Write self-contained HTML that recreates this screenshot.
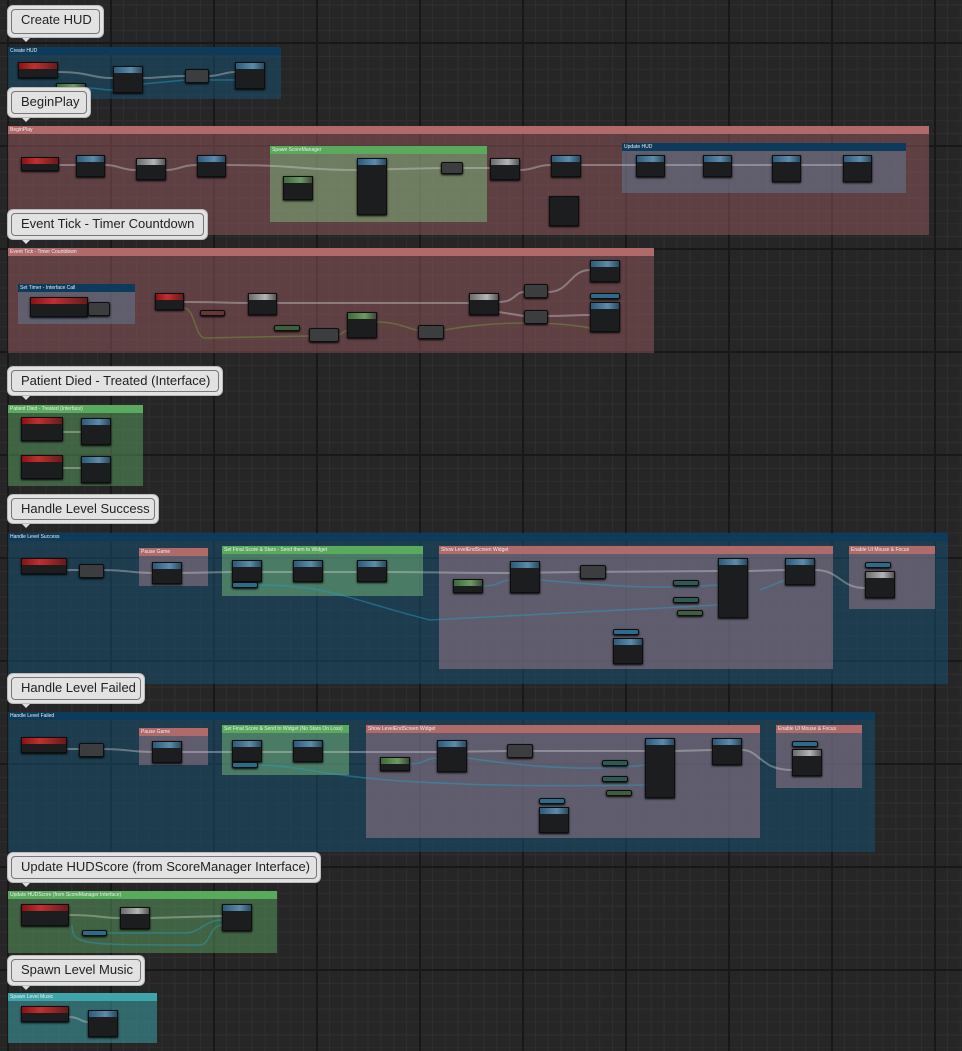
<!DOCTYPE html>
<html><head><meta charset="utf-8"><style>
*{margin:0;padding:0;box-sizing:border-box}
html,body{width:962px;height:1051px;overflow:hidden}
body{position:relative;background-color:#262626;
background-image:
linear-gradient(90deg,#181818 2px,transparent 2px),
linear-gradient(0deg,#181818 2px,transparent 2px),
linear-gradient(90deg,#2f2f2f 1px,transparent 1px),
linear-gradient(0deg,#2f2f2f 1px,transparent 1px);
background-size:103px 103px,103px 103px,12.875px 12.875px,12.875px 12.875px;
background-position:7px 0,0 44px,7px 0,0 44px;
font-family:"Liberation Sans",sans-serif}
.c{position:absolute;border:0}
.c .t{height:8px;font-size:5px;color:#eee;padding-left:2px;line-height:8px;white-space:nowrap;overflow:hidden}
.c .b{position:absolute;left:0;right:0;top:8px;bottom:0}
.blue .t{background:#0c3b5c}.blue .b{background:rgba(22,78,112,.55)}
.red .t{background:#b06a6a}.red .b{background:rgba(150,90,95,.5)}
.green .t{background:#5aaa5e}.green .b{background:rgba(90,160,95,.5)}
.teal .t{background:#3ea6aa}.teal .b{background:rgba(60,160,165,.55)}
.inred .t{background:#b06a6a}.inred .b{background:rgba(150,120,135,.55)}
.inblue .t{background:#0c3b5c}.inblue .b{background:rgba(100,130,160,.45)}
.ingreen .t{background:#5aaa5e}.ingreen .b{background:rgba(130,200,130,.45)}
.cb{position:absolute;background:#e2e2e2;border-radius:5px;padding:3px;box-shadow:0 0 0 1px #bbb}
.cb div{border:1px solid #777;border-radius:4px;height:100%;font-size:13px;color:#222;padding:0 9px;line-height:20px;white-space:nowrap}
.cb:after{content:"";position:absolute;left:14px;bottom:-5px;border:4px solid transparent;border-top-color:#ddd;border-bottom:0}
.n{position:absolute;background:#1b1d1e;border:1px solid #0e0e0e;box-shadow:0 1px 2px #000}
.n:before{content:"";position:absolute;left:0;right:0;top:0;height:6px}
.n.r:before{background:linear-gradient(90deg,#8a1212,#c03030 40%,#6a1a1a)}
.n.u:before{background:linear-gradient(90deg,#2d5a7a,#5b8cab 60%,#294a60)}
.n.g:before{background:linear-gradient(90deg,#6a6a6a,#b5b5b5 60%,#555)}
.n.gr:before{background:linear-gradient(90deg,#3d6a3d,#6f9a60 60%,#3a4a3a)}
.n.s{background:#3b3d3f;border-radius:2px}
.n.s:before{display:none}
.n.sb{background:#2e6a8a;border-radius:2px}.n.sb:before{display:none}
.n.sg{background:#3e5e3e;border-radius:2px}.n.sg:before{display:none}
.n.st{background:#2d5a52;border-radius:2px}.n.st:before{display:none}
svg{position:absolute;left:0;top:0}
</style></head><body>

<!-- comment boxes -->
<div class="c blue" style="left:8px;top:47px;width:273px;height:52px"><div class="t">Create HUD</div><div class="b"></div></div>
<div class="c red" style="left:8px;top:126px;width:921px;height:109px"><div class="t">BeginPlay</div><div class="b"></div></div>
<div class="c ingreen" style="left:270px;top:146px;width:217px;height:76px"><div class="t">Spawn ScoreManager</div><div class="b"></div></div>
<div class="c inblue" style="left:622px;top:143px;width:284px;height:50px"><div class="t">Update HUD</div><div class="b"></div></div>
<div class="c red" style="left:8px;top:248px;width:646px;height:105px"><div class="t">Event Tick - Timer Countdown</div><div class="b"></div></div>
<div class="c inblue" style="left:18px;top:284px;width:117px;height:40px"><div class="t">Set Timer - Interface Call</div><div class="b"></div></div>
<div class="c green" style="left:8px;top:405px;width:135px;height:81px"><div class="t">Patient Died - Treated (Interface)</div><div class="b"></div></div>
<div class="c blue" style="left:8px;top:533px;width:940px;height:151px"><div class="t">Handle Level Success</div><div class="b"></div></div>
<div class="c inred" style="left:139px;top:548px;width:69px;height:38px"><div class="t">Pause Game</div><div class="b"></div></div>
<div class="c ingreen" style="left:222px;top:546px;width:201px;height:50px"><div class="t">Set Final Score &amp; Stars - Send them to Widget</div><div class="b"></div></div>
<div class="c inred" style="left:439px;top:546px;width:394px;height:123px"><div class="t">Show LevelEndScreen Widget</div><div class="b"></div></div>
<div class="c inred" style="left:849px;top:546px;width:86px;height:63px"><div class="t">Enable UI Mouse &amp; Focus</div><div class="b"></div></div>
<div class="c blue" style="left:8px;top:712px;width:867px;height:140px"><div class="t">Handle Level Failed</div><div class="b"></div></div>
<div class="c inred" style="left:139px;top:728px;width:69px;height:37px"><div class="t">Pause Game</div><div class="b"></div></div>
<div class="c ingreen" style="left:222px;top:725px;width:127px;height:50px"><div class="t">Set Final Score &amp; Send to Widget (No Stars On Loss)</div><div class="b"></div></div>
<div class="c inred" style="left:366px;top:725px;width:394px;height:113px"><div class="t">Show LevelEndScreen Widget</div><div class="b"></div></div>
<div class="c inred" style="left:776px;top:725px;width:86px;height:63px"><div class="t">Enable UI Mouse &amp; Focus</div><div class="b"></div></div>
<div class="c green" style="left:8px;top:891px;width:269px;height:62px"><div class="t">Update HUDScore (from ScoreManager Interface)</div><div class="b"></div></div>
<div class="c teal" style="left:8px;top:993px;width:149px;height:50px"><div class="t">Spawn Level Music</div><div class="b"></div></div>

<!-- wires -->
<svg width="962" height="1051" fill="none">
<g stroke="rgba(210,210,210,.4)" stroke-width="2">
<path d="M58 72 C90 72 90 78 113 78 L143 78 C160 78 165 76 185 76 L209 76 C220 76 225 72 235 72"/>
<path d="M59 165 L76 165 M105 165 C120 165 120 170 136 170 M166 170 C180 170 180 165 197 165 M226 165 C300 165 300 170 357 170 L441 168 L490 168 M520 170 C535 170 535 165 551 165 M581 165 L636 165 L703 165 L772 165 L843 165"/>
<path d="M184 302 C220 302 220 303 248 303 L469 303 M499 302 C515 302 515 292 524 292 M548 292 C570 292 570 270 590 270 M499 312 L524 316 M548 316 C570 316 570 315 590 315"/>
<path d="M63 432 L81 432 M63 468 L81 468"/>
<path d="M67 570 L79 570 M104 570 C130 570 130 573 152 573 M182 573 L232 572 L293 572 L357 572 M387 572 C430 572 440 573 510 573 L580 572 L718 571 M748 571 L785 570 M815 570 C840 570 840 588 865 588"/>
<path d="M67 749 L79 749 M104 749 C130 749 130 752 152 752 M182 752 L232 752 L293 752 M323 752 C350 752 350 752 437 752 L507 751 L645 751 M675 751 L712 750 M742 750 C760 750 760 770 792 770"/>
<path d="M69 915 C100 915 100 918 120 918 L150 918 L222 916"/>
<path d="M69 1017 C80 1017 80 1022 88 1022"/>
</g>
<g stroke="rgba(40,160,200,.45)" stroke-width="1.5">
<path d="M86 88 C100 88 100 90 113 90 M143 84 L185 80 L235 80"/>
<path d="M483 586 C500 586 500 580 510 580 M540 580 C600 585 650 590 718 585 M760 590 L785 580"/>
<path d="M258 585 C330 585 350 600 430 620 L718 605"/>
<path d="M410 764 C425 764 425 758 437 758 M467 758 C550 770 600 770 645 765"/>
<path d="M258 765 C320 765 330 790 645 785"/>
<path d="M107 933 L185 933 C200 933 205 920 222 920 M72 925 C72 945 80 945 200 945 C210 945 210 925 222 925"/>
</g>
<g stroke="rgba(120,170,60,.4)" stroke-width="1.5">
<path d="M184 308 C195 308 195 338 205 338 L309 336 M339 335 L347 330 M377 322 C400 322 410 330 418 330 M444 330 C500 320 560 322 590 328"/>
</g>
</svg>

<!-- nodes -->
<div class="n r" style="left:18px;top:62px;width:40px;height:16px"></div>
<div class="n gr" style="left:56px;top:83px;width:30px;height:12px"></div>
<div class="n u" style="left:113px;top:66px;width:30px;height:27px"></div>
<div class="n s" style="left:185px;top:69px;width:24px;height:14px"></div>
<div class="n u" style="left:235px;top:62px;width:30px;height:27px"></div>

<div class="n r" style="left:21px;top:157px;width:38px;height:14px"></div>
<div class="n u" style="left:76px;top:155px;width:29px;height:22px"></div>
<div class="n g" style="left:136px;top:158px;width:30px;height:22px"></div>
<div class="n u" style="left:197px;top:155px;width:29px;height:22px"></div>
<div class="n gr" style="left:283px;top:176px;width:30px;height:24px"></div>
<div class="n u" style="left:357px;top:158px;width:30px;height:57px"></div>
<div class="n s" style="left:441px;top:162px;width:22px;height:12px"></div>
<div class="n g" style="left:490px;top:158px;width:30px;height:22px"></div>
<div class="n u" style="left:551px;top:155px;width:30px;height:22px"></div>
<div class="n" style="left:549px;top:196px;width:30px;height:30px"></div>
<div class="n u" style="left:636px;top:155px;width:29px;height:22px"></div>
<div class="n u" style="left:703px;top:155px;width:29px;height:22px"></div>
<div class="n u" style="left:772px;top:155px;width:29px;height:27px"></div>
<div class="n u" style="left:843px;top:155px;width:29px;height:27px"></div>

<div class="n r" style="left:30px;top:297px;width:58px;height:20px"></div>
<div class="n s" style="left:88px;top:302px;width:22px;height:14px"></div>
<div class="n r" style="left:155px;top:293px;width:29px;height:17px"></div>
<div class="n s" style="left:200px;top:310px;width:25px;height:6px;background:#6a3535"></div>
<div class="n g" style="left:248px;top:293px;width:29px;height:22px"></div>
<div class="n sg" style="left:274px;top:325px;width:26px;height:6px"></div>
<div class="n s" style="left:309px;top:328px;width:30px;height:14px"></div>
<div class="n gr" style="left:347px;top:312px;width:30px;height:26px"></div>
<div class="n s" style="left:418px;top:325px;width:26px;height:14px"></div>
<div class="n g" style="left:469px;top:293px;width:30px;height:22px"></div>
<div class="n s" style="left:524px;top:284px;width:24px;height:14px"></div>
<div class="n s" style="left:524px;top:310px;width:24px;height:14px"></div>
<div class="n u" style="left:590px;top:260px;width:30px;height:22px"></div>
<div class="n sb" style="left:590px;top:293px;width:30px;height:6px"></div>
<div class="n u" style="left:590px;top:302px;width:30px;height:30px"></div>

<div class="n r" style="left:21px;top:417px;width:42px;height:24px"></div>
<div class="n u" style="left:81px;top:418px;width:30px;height:27px"></div>
<div class="n r" style="left:21px;top:455px;width:42px;height:24px"></div>
<div class="n u" style="left:81px;top:456px;width:30px;height:27px"></div>

<div class="n r" style="left:21px;top:558px;width:46px;height:16px"></div>
<div class="n s" style="left:79px;top:564px;width:25px;height:14px"></div>
<div class="n u" style="left:152px;top:562px;width:30px;height:22px"></div>
<div class="n u" style="left:232px;top:560px;width:30px;height:22px"></div>
<div class="n sb" style="left:232px;top:582px;width:26px;height:6px"></div>
<div class="n u" style="left:293px;top:560px;width:30px;height:22px"></div>
<div class="n u" style="left:357px;top:560px;width:30px;height:22px"></div>
<div class="n gr" style="left:453px;top:579px;width:30px;height:14px"></div>
<div class="n u" style="left:510px;top:561px;width:30px;height:32px"></div>
<div class="n s" style="left:580px;top:565px;width:26px;height:14px"></div>
<div class="n u" style="left:718px;top:558px;width:30px;height:60px"></div>
<div class="n u" style="left:785px;top:558px;width:30px;height:27px"></div>
<div class="n st" style="left:673px;top:580px;width:26px;height:6px"></div>
<div class="n st" style="left:673px;top:597px;width:26px;height:6px"></div>
<div class="n sg" style="left:677px;top:610px;width:26px;height:6px"></div>
<div class="n sb" style="left:613px;top:629px;width:26px;height:6px"></div>
<div class="n u" style="left:613px;top:638px;width:30px;height:26px"></div>
<div class="n sb" style="left:865px;top:562px;width:26px;height:6px"></div>
<div class="n g" style="left:865px;top:571px;width:30px;height:27px"></div>

<div class="n r" style="left:21px;top:737px;width:46px;height:16px"></div>
<div class="n s" style="left:79px;top:743px;width:25px;height:14px"></div>
<div class="n u" style="left:152px;top:741px;width:30px;height:22px"></div>
<div class="n u" style="left:232px;top:740px;width:30px;height:22px"></div>
<div class="n sb" style="left:232px;top:762px;width:26px;height:6px"></div>
<div class="n u" style="left:293px;top:740px;width:30px;height:22px"></div>
<div class="n gr" style="left:380px;top:757px;width:30px;height:14px"></div>
<div class="n u" style="left:437px;top:740px;width:30px;height:32px"></div>
<div class="n s" style="left:507px;top:744px;width:26px;height:14px"></div>
<div class="n u" style="left:645px;top:738px;width:30px;height:60px"></div>
<div class="n u" style="left:712px;top:738px;width:30px;height:27px"></div>
<div class="n st" style="left:602px;top:760px;width:26px;height:6px"></div>
<div class="n st" style="left:602px;top:776px;width:26px;height:6px"></div>
<div class="n sg" style="left:606px;top:790px;width:26px;height:6px"></div>
<div class="n sb" style="left:539px;top:798px;width:26px;height:6px"></div>
<div class="n u" style="left:539px;top:807px;width:30px;height:26px"></div>
<div class="n sb" style="left:792px;top:741px;width:26px;height:6px"></div>
<div class="n g" style="left:792px;top:749px;width:30px;height:27px"></div>

<div class="n r" style="left:21px;top:904px;width:48px;height:22px"></div>
<div class="n sb" style="left:82px;top:930px;width:25px;height:6px"></div>
<div class="n g" style="left:120px;top:907px;width:30px;height:22px"></div>
<div class="n u" style="left:222px;top:904px;width:30px;height:27px"></div>

<div class="n r" style="left:21px;top:1006px;width:48px;height:16px"></div>
<div class="n u" style="left:88px;top:1010px;width:30px;height:27px"></div>

<!-- callouts -->
<div class="cb" style="left:8px;top:6px;width:95px;height:31px"><div>Create HUD</div></div>
<div class="cb" style="left:8px;top:88px;width:82px;height:29px"><div>BeginPlay</div></div>
<div class="cb" style="left:8px;top:210px;width:199px;height:29px"><div>Event Tick - Timer Countdown</div></div>
<div class="cb" style="left:8px;top:367px;width:214px;height:28px"><div>Patient Died - Treated (Interface)</div></div>
<div class="cb" style="left:8px;top:495px;width:150px;height:28px"><div>Handle Level Success</div></div>
<div class="cb" style="left:8px;top:674px;width:136px;height:29px"><div>Handle Level Failed</div></div>
<div class="cb" style="left:8px;top:853px;width:312px;height:29px"><div>Update HUDScore (from ScoreManager Interface)</div></div>
<div class="cb" style="left:8px;top:956px;width:136px;height:29px"><div>Spawn Level Music</div></div>
</body></html>
